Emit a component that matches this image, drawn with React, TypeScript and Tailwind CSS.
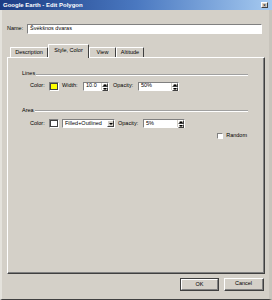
import React from "react";

const font = { fontFamily: '"Liberation Sans", Arial, sans-serif' };

function Spinner() {
  return (
    <div className="flex h-full w-[7px] flex-col border-l border-[#d4d0c8]">
      <div className="flex flex-1 items-center justify-center border border-b-[#404040] border-l-white border-r-[#404040] border-t-white bg-[#d4d0c8]">
        <div className="h-0 w-0 border-x-[2px] border-b-[2px] border-x-transparent border-b-black" />
      </div>
      <div className="flex flex-1 items-center justify-center border border-b-[#404040] border-l-white border-r-[#404040] border-t-white bg-[#d4d0c8]">
        <div className="h-0 w-0 border-x-[2px] border-t-[2px] border-x-transparent border-t-black" />
      </div>
    </div>
  );
}

function SpinInput({ value, width }: { value: string; width: string }) {
  return (
    <div className={`flex h-[9px] ${width} border border-b-white border-l-[#808080] border-r-white border-t-[#808080] bg-white`}>
      <div className="flex flex-1 items-center pl-[2px] text-[5.5px] leading-none">{value}</div>
      <Spinner />
    </div>
  );
}

function Swatch({ color }: { color: string }) {
  return (
    <div className="h-[9px] w-[10px] border border-b-white border-l-[#808080] border-r-white border-t-[#808080]">
      <div className={`h-full w-full border border-[#404040] ${color}`} />
    </div>
  );
}

function GroupLabel({ text }: { text: string }) {
  return (
    <div className="flex items-end pl-[14px] pr-[15px]">
      <span className="text-[5.5px] leading-none">{text}</span>
      <div className="mb-[1px] ml-[1px] flex-1 border-b border-t border-b-white border-t-[#a0a0a0]" />
    </div>
  );
}

function Tab({ label, width, active }: { label: string; width: string; active?: boolean }) {
  return (
    <div
      className={`flex items-center justify-center rounded-t-[1px] border-l border-r border-t border-l-white border-r-[#404040] border-t-white bg-[#d4d0c8] text-[5.5px] leading-none ${width} ${
        active ? "relative z-10 -mb-[1px] h-[14px] pb-[2px]" : "h-[10px]"
      }`}
    >
      {label}
    </div>
  );
}

function Button({ label, isDefault }: { label: string; isDefault?: boolean }) {
  return (
    <div
      className={`flex h-[13px] items-center justify-center border bg-[#d4d0c8] text-[5.5px] leading-none ${
        isDefault ? "w-[39px] border-[#404040]" : "w-[40px] border-b-[#404040] border-l-white border-r-[#404040] border-t-white"
      }`}
    >
      <div className={`flex h-full w-full items-center justify-center ${isDefault ? "border border-b-[#808080] border-l-white border-r-[#808080] border-t-white" : "border-b border-r border-[#808080]"}`}>
        {label}
      </div>
    </div>
  );
}

export default function App() {
  return (
    <div
      style={font}
      className="flex h-[300px] w-[272px] flex-col border-b border-l-[2px] border-r-[3px] border-b-[#404040] border-l-[#e4e2dc] border-r-[#c8c4bc] bg-[#d4d0c8] text-black"
    >
      {/* title bar */}
      <div className="-ml-[2px] -mr-[3px] flex h-[10px] items-center justify-between bg-linear-to-r from-[#1c3c84] via-[#4a78c0] to-[#a6caf0] pl-[3px] pr-[4px]">
        <span className="text-[6px] font-bold leading-none text-white">Google Earth - Edit Polygon</span>
        <div className="flex h-[6px] w-[7px] items-center justify-center border border-b-[#404040] border-l-white border-r-[#404040] border-t-white bg-[#d4d0c8] text-[5px] leading-none">
          ×
        </div>
      </div>

      {/* name row */}
      <div className="mt-[14px] flex items-center pl-[5px]">
        <span className="w-[20px] text-[5.5px] leading-none">Name:</span>
        <div className="flex h-[10px] w-[235px] items-center border border-b-white border-l-[#808080] border-r-white border-t-[#808080] bg-white pl-[2px] text-[5.5px] leading-none">
          Švėkšnos dvaras
        </div>
      </div>

      {/* tabs */}
      <div className="mt-[10px] flex items-end pl-[8px]">
        <Tab label="Description" width="w-[38px]" />
        <Tab label="Style, Color" width="w-[41px]" active />
        <Tab label="View" width="w-[27px]" />
        <Tab label="Altitude" width="w-[28px]" />
      </div>

      {/* panel */}
      <div className="ml-[5px] h-[217px] w-[258px] border border-b-[#404040] border-l-white border-r-[#404040] border-t-white">
        <div className="h-full w-full border-b border-r border-[#808080] pt-[13px]">
          <GroupLabel text="Lines" />
          <div className="mt-[5px] flex items-center pl-[22px]">
            <span className="w-[19px] text-[5.5px] leading-none">Color:</span>
            <Swatch color="bg-[#ffff00]" />
            <span className="ml-[3px] w-[21px] text-[5.5px] leading-none">Width:</span>
            <SpinInput value="10.0" width="w-[26px]" />
            <span className="ml-[4px] w-[25px] text-[5.5px] leading-none">Opacity:</span>
            <SpinInput value="50%" width="w-[41px]" />
          </div>

          <div className="mt-[17px]">
            <GroupLabel text="Area" />
          </div>
          <div className="mt-[6px] flex items-center pl-[22px]">
            <span className="w-[19px] text-[5.5px] leading-none">Color:</span>
            <Swatch color="bg-white" />
            <div className="ml-[3px] flex h-[9px] w-[53px] border border-b-white border-l-[#808080] border-r-white border-t-[#808080] bg-white">
              <div className="flex flex-1 items-center pl-[2px] text-[5.5px] leading-none">Filled+Outlined</div>
              <div className="flex w-[7px] items-center justify-center border border-b-[#404040] border-l-white border-r-[#404040] border-t-white bg-[#d4d0c8]">
                <div className="h-0 w-0 border-x-[2px] border-t-[2px] border-x-transparent border-t-black" />
              </div>
            </div>
            <span className="ml-[3px] w-[25px] text-[5.5px] leading-none">Opacity:</span>
            <SpinInput value="5%" width="w-[42px]" />
          </div>
          <div className="mt-[5px] flex items-center justify-end pr-[16px]">
            <div className="h-[6px] w-[6px] border border-b-white border-l-[#808080] border-r-white border-t-[#808080] bg-white" />
            <span className="ml-[3px] text-[5.5px] leading-none">Random</span>
          </div>
        </div>
      </div>

      {/* buttons */}
      <div className="mt-[4px] flex justify-end gap-[5px] pr-[5px]">
        <Button label="OK" isDefault />
        <Button label="Cancel" />
      </div>
    </div>
  );
}
